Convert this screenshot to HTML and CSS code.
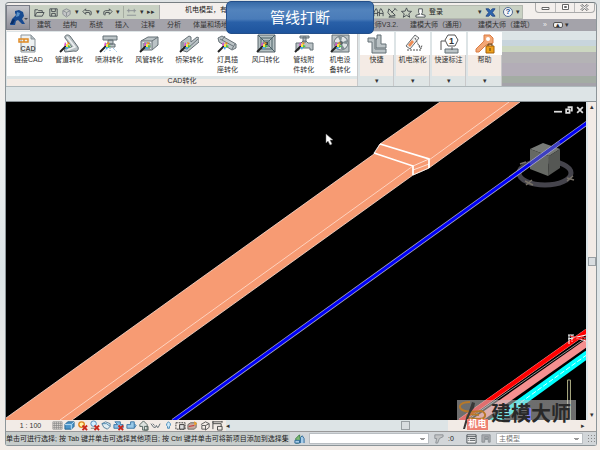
FILE: index.html
```html
<!DOCTYPE html>
<html lang="en">
<head>
<meta charset="utf-8">
<title>管线打断</title>
<link rel="stylesheet" href="styles.css">
</head>
<body>
<div class="window">
  <div class="banner">管线打断</div>
  <header class="top">
    <button class="app" aria-label="R"><svg width="24" height="24" viewBox="0 0 24 24"><path d="M9 5l4-1 4 2 1 4-2 3 3 5h-3l-4-4-2 1-1 4H4l2-6 4-4-1-2z" fill="#174a91"/><path d="M11 6l3 1-1 3-3 1z" fill="#5b91c7"/><path d="M4 18l3-5 2 1-2 4z" fill="#082d66"/><path d="M18 12h4l-2 2z" fill="#4b4b50"/></svg></button>
    <div class="bars">
      <div class="titlebar">
        <div class="quick">
          <button aria-label="打开"><svg class="s" viewBox="0 0 12 12"><path d="M1 10V3h3l1 1h4v2M1 10l2-4h8l-2 4z"/></svg></button>
          <button aria-label="保存"><svg class="s" viewBox="0 0 12 12"><path d="M2 2h8v8H2zM4 2v3h4V2M4 10V7h4v3"/></svg></button>
          <button aria-label="同步"><svg class="s dim" viewBox="0 0 12 12"><path d="M2 4l4-2 4 2v4l-4 3-4-3zM2 4l4 2 4-2M6 6v4"/></svg></button><i>▾</i>
          <button aria-label="撤销"><svg class="s" viewBox="0 0 12 12"><path d="M4 2L1 5l3 3V6h4l1 3 1-1V5L8 4H4z"/></svg></button><i>▾</i>
          <button aria-label="重做"><svg class="s" viewBox="0 0 12 12"><path d="M8 2l3 3-3 3V6H4L3 9 2 8V5l2-1h4z"/></svg></button><i>▾</i>
          <span class="rule"></span>
          <button aria-label="测量"><svg class="s dim" viewBox="0 0 12 12"><path d="M1 4h10M3 2v4M9 2v4M1 9h10"/></svg></button><i>▾</i><i>▸▸</i>
        </div>
        <span class="doc">机电模型，有</span>
        <div class="info">
          <svg class="s" viewBox="0 0 12 12"><path d="M1 10V6l2-4h1l1 3v5M7 10V5l1-3h1l2 4v4M5 6h2M1 7h4M7 7h4"/></svg>
          <svg class="s" viewBox="0 0 12 12"><path d="M2 2l7 7-5 1-3-4zM5 6l4-4M4 10l-2 1h7M8 1l3 3"/></svg>
          <svg class="s" viewBox="0 0 12 12"><path d="M6 1l1.5 3.5 4 .3-3 2.6 1 3.8L6 9l-3.500 2.200 1-3.800-3-2.600 4-.3z"/></svg>
          <svg class="s" viewBox="0 0 12 12"><path d="M4 2h4v4L7 8l4 1v2H1V9l4-1-1-2z" fill="#fff"/></svg>
          <button class="login">登录</button>
          <i>▾</i>
          <svg class="s" viewBox="0 0 12 12"><path d="M1 2h3l2 2 2-2h3L8 6l3 4H8L6 8l-2 2H1l3-4z" fill="#2c66b0" stroke="#284a86"/></svg>
          <span class="rule"></span>
          <button class="help" aria-label="帮助">?</button><i>▾</i>
        </div>
        <div class="winbtns">
          <button aria-label="最小化"><svg width="9" height="7"><path d="M1 3.500h7v2H1z"/></svg></button>
          <button aria-label="还原"><svg width="9" height="7"><path d="M1.500 .5h6v5h-6zM3.500 2.500h2v1h-2z"/></svg></button>
          <button aria-label="关闭"><svg width="9" height="7"><path d="M2 .5l2.500 2L7 .5l1 1-2 2 2 2-1 1-2.500-2-2.500 2-1-1 2-2-2-2z"/></svg></button>
        </div>
      </div>
      <nav class="tabs">
        <a href="#">建筑</a><a href="#">结构</a><a href="#">系统</a><a href="#">插入</a><a href="#">注释</a><a href="#">分析</a><a href="#">体量和场地</a>
        <a href="#" class="push">建模大师V3.2.</a><a href="#">建模大师（通用）</a><a href="#">建模大师（建筑）</a>
        <span class="more">»</span><button class="fold" aria-label="折叠">▴</button><i>▾</i>
      </nav>
    </div>
  </header>

  <section class="ribbon">
    <div class="panel cad">
      <div class="tools">
        <button><svg class="b" viewBox="0 0 20 20"><path d="M3 1h10l4 4v13H3z" fill="#edf1f2" stroke="#8b9499"/><path d="M13 1v4h4" fill="#b4bec3" stroke="#8b9499"/><path d="M1 5h5v3H1zM6 5h4v3H6" fill="none" stroke="#e08b25" stroke-width="1.500"/><text x="10" y="17" text-anchor="middle" class="cadtext">CAD</text></svg>链接CAD</button>
        <button><svg class="b" viewBox="0 0 20 20"><path d="M6 4c-1-3 3-4 5-2l8 11c1 3-1 5-4 4l-9 1-1-3 8-2z" class="metal"/><path d="M8 3l8 10-8 3" fill="none" stroke="#eef2f3" stroke-width="1.500"/><use href="#wand"/></svg>管道转化</button>
        <button><svg class="b" viewBox="0 0 20 20"><path d="M4 2h14v4H4zM9 6h5v4H9zM7 10h9v3H7z" class="metal"/><path d="M8 14l-3 4M11 14v4M14 14l4 4" stroke="#70a8d8" stroke-dasharray="1 1"/><use href="#wand"/></svg>喷淋转化</button>
        <button><svg class="b" viewBox="0 0 20 20"><path d="M2 7l7-4h10v8l-6 5H2z" class="metal"/><path d="M2 7h11v9M13 7l6-4M5 9h6v5H5z" fill="#e9edee" stroke="#677177"/><use href="#wand"/></svg>风管转化</button>
        <button><svg class="b" viewBox="0 0 20 20"><path d="M2 8l8-6 2 1v5l6-5 2 1v4L8 18l-6-2z" class="metal"/><path d="M4 8v5l4 2L19 5" fill="none" stroke="#69747a"/><use href="#wand"/></svg>桥架转化</button>
        <button><svg class="b" viewBox="0 0 20 20"><path d="M1 4l4-2 14 8v4l-4 2L2 8z" class="metal"/><path d="M3 5l13 7M8 2l-3 4M18 10l-3 5" stroke="#69747a"/><use href="#wand"/></svg>灯具插<br>座转化</button>
        <button><svg class="b" viewBox="0 0 20 20"><path d="M2 1h17v17H2z" fill="#b4c0c2" stroke="#59646a"/><path d="M5 4h11v11H5zM8 7h5v5H8zM2 1l6 6M19 1l-6 6M19 18l-6-6" fill="none" stroke="#4a6067"/><path d="M9 8h3v3H9z" fill="#33464d"/><use href="#wand"/></svg>风口转化</button>
        <button><svg class="b" viewBox="0 0 20 20"><path d="M2 9h5l2-2h3l2 2h5v7h-3v-2H5v2H2zM9 3h3v5H9zM6 2h9v2H6z" class="metal"/><use href="#wand"/></svg>管线附<br>件转化</button>
        <button><svg class="b" viewBox="0 0 20 20"><path d="M2 1h17v17H2z" class="metal"/><circle cx="11" cy="9" r="7" fill="#e1e5e7" stroke="#69747a"/><path d="M11 9L8 3h4zM11 9l6-3v4zM11 9l4 6h-4zM11 9l-6 3V8z" fill="#819095"/><circle cx="11" cy="9" r="2" fill="#59646a"/><use href="#wand"/></svg>机电设<br>备转化</button>
      </div>
      <div class="caption">CAD转化</div>
    </div>
    <div class="panel small"><button><svg class="b" viewBox="0 0 20 20"><path d="M1 4h7v11h11v4H5V8H1zM10 1h4v9h5v4H9V5h1z" class="metal"/></svg><span>快捷</span></button><div class="drop">▾</div></div>
    <div class="panel small"><button><svg class="b" viewBox="0 0 20 20"><path d="M3 12L12 1l4 3-9 11z" fill="#eee" stroke="#686d70"/><path d="M5 11l4-5 2 2-4 5z" fill="#ef8b52"/><path d="M4 16h15M12 4l5 10M16 11l2 4 1-4" fill="none" stroke="#555" stroke-dasharray="2 1"/></svg><span>机电深化</span></button><div class="drop">▾</div></div>
    <div class="panel small"><button><svg class="b" viewBox="0 0 20 20"><path d="M6 15h13v4H6z" class="metal"/><path d="M2 16V7h4M13 13v3M9 1h7l3 5-3 6H9L6 6z" fill="#fff" stroke="#555"/><text x="12.500" y="10" text-anchor="middle" class="num">1</text></svg><span>快速标注</span></button><div class="drop">▾</div></div>
    <div class="panel small"><button><svg class="b" viewBox="0 0 20 20"><path d="M9 1h6l3 3v5l-3 2h-4l-7 7H1v-3l8-8z" fill="#f3a775" stroke="#d97d45"/><circle cx="13" cy="5" r="2" fill="#fff"/><path d="M11 12h8v7h-8z" fill="#eda11c" stroke="#a76108"/><path d="M13 12v-2h4v2M15 14v3" fill="none" stroke="#5b3c15"/></svg><span>帮助</span></button><div class="drop">▾</div></div>
    <div class="stripes"></div>
  </section>
  <div class="options"></div>

  <main class="work">
    <div class="view">
      <svg class="scene" viewBox="6 102 580 318" preserveAspectRatio="xMinYMin slice">
        <path d="M6 418L374 154l6-10 60-42h80l-91 66-16 7L72 420H6z" fill="#f79b73"/>
        <path d="M6 418L374 154l6-10 60-42M520 102l-91 66-16 7L72 420M60 420L413 166M429 160l80-58" fill="none" stroke="#ffe0d2" stroke-width=".8"/>
        <path d="M374 153l39 13v9M380 144l49 15v9" fill="none" stroke="#fff" stroke-width="1.700"/>
        <path d="M413 166l16-7M413 175l16-7M413 170l16-6M374 153l6-9" fill="none" stroke="#fff" stroke-width=".7"/>
        <ellipse cx="545" cy="173" rx="26" ry="12" fill="none" stroke="#45444c" stroke-width="5"/>
        <path d="M530 149l13-6 17 6-11 7z" fill="#777a76"/>
        <path d="M530 149l19 7-1 20-18-7z" fill="#666964"/>
        <path d="M549 156l11-7v19l-12 8z" fill="#555754"/>
        <path d="M525 181l8 4M526 185l6-5M567 178l7 2M567 181l6-5M520 164l6-2" stroke="#777167" stroke-width="1.500"/>
        <path d="M173 421L587 123" stroke="#aaaacd" stroke-width="4.500"/>
        <path d="M173 421L587 123" stroke="#0000f5" stroke-width="3"/>
        <path d="M530 164L560 142.500" stroke="#70728f" stroke-width="3" stroke-opacity=".55"/>
        <path d="M460 421L587 331" stroke="#ff9b9b" stroke-width="5"/><path d="M460 421L587 331" stroke="#f00" stroke-width="4"/>
        <path d="M466 421l121-84" stroke="#bbb" stroke-width=".8"/>
        <path d="M473 423L588 342" stroke="#f59090" stroke-width="7"/>
        <path d="M492 423L588 354" stroke="#0ff" stroke-width="8"/><path d="M492 423L588 354" stroke="#d8ffff" stroke-width="1" stroke-dasharray="5 2"/>
        <path d="M568 335h6M569 335v9M572 335v7M568 339l18-4M571 336l15 5" fill="none" stroke="#fff"/><path d="M570 336l16 4M571 341l15-4" stroke="#f22"/>
        <path d="M567.500 420v-40h3v40" fill="#111" stroke="#a4a47d"/>
        <path d="M527 408h4v12h-4z" fill="#22f"/>
        <path d="M326 134v9l2-2 2 4 2-1-2-4h3z" fill="#fff" stroke="#777" stroke-width=".5"/>
      </svg>
      <div class="mdi"><button aria-label="最小化"><svg viewBox="0 0 7 7"><path d="M0 5h7"/></svg></button><button aria-label="还原"><svg viewBox="0 0 7 7"><path d="M1 3h3v3H1zM3 2V1h3v3H5"/></svg></button><button aria-label="关闭"><svg viewBox="0 0 7 7"><path d="M1 1l5 5M6 1L1 6"/></svg></button></div>
      <div class="mark">
        <svg width="34" height="30" viewBox="0 0 34 30"><path d="M13 2C4 2 1 6 4 9s13 3 21 2M25 11c5 3 4 8-3 8s-13-1-12-3 7-2 12-1" fill="none" stroke="#b87827" stroke-width="2"/><path d="M15 2l3 1-1 5-3 4-3 7-3 10H6l3-11 3-7z" fill="#383838"/></svg>
        <span class="tag">机电</span><strong>建模大师</strong>
      </div>
    </div>
    <div class="vscroll"><span>▴</span><b></b><span>▾</span></div>
  </main>

  <div class="viewbar">
    <button class="scale">1 : 100</button>
    <div class="icons">
      <svg viewBox="0 0 12 12"><path d="M1 2h10v8H1zM1 4h10M1 6h10M1 8h10M3 2v8M5 2v8M7 2v8M9 2v8" fill="none" stroke="#858585" stroke-width=".8"/></svg>
      <svg viewBox="0 0 12 12"><path d="M1 5l3-3h7v5l-3 3H1z" fill="#4b94c9" stroke="#28658e"/><path d="M1 5h7v5M8 5l3-3" stroke="#bfe3f7" fill="none"/></svg>
      <svg viewBox="0 0 12 12"><circle cx="5" cy="5" r="3" fill="#fff3a8" stroke="#df851f" stroke-width="1.500"/><use href="#x"/></svg>
      <svg viewBox="0 0 12 12"><circle cx="5" cy="4" r="3" fill="#d5edff" stroke="#4a86b8"/><path d="M2 9h5" stroke="#777"/><use href="#x"/></svg>
      <svg viewBox="0 0 12 12"><path d="M1 4l4-2 5 2v3l-3 3-4-2z" fill="#e1edf2" stroke="#557e99"/><path d="M1 4h5l4 3" stroke="#4a87af" fill="none"/></svg>
      <svg viewBox="0 0 12 12"><path d="M2 2h6v3h3v4H1V5h4z" fill="#8cc0e5" stroke="#3a75a5"/><use href="#x"/></svg>
      <svg viewBox="0 0 12 12"><path d="M1 9V5h4V2h4v7zM9 4l2 2-2 3" fill="#99c9e8" stroke="#3a75a5"/></svg>
      <svg viewBox="0 0 12 12"><path d="M2 5l4-4 4 4v6H5V7H2zM7 7h4v4H7z" fill="#dce2df" stroke="#50605b"/></svg>
      <svg viewBox="0 0 12 12"><path d="M1 4l3 4h2l1-2 1 2h1l2-4M3 4l2 2" fill="none" stroke="#58656d"/></svg>
      <svg viewBox="0 0 12 12"><path d="M4 4l2-2 2 2v2L7 7v2H5V7L4 6z" fill="#d3ecfa" stroke="#3c82b5"/></svg>
      <svg viewBox="0 0 12 12"><path d="M1 3h10v7H1z" fill="none" stroke="#333" stroke-dasharray="2 1"/><path d="M5 5h5v5H5z" fill="#ddd" stroke="#333"/></svg>
      <svg viewBox="0 0 12 12"><path d="M1 5l3-2h6v5L8 10H1z" fill="#c5aaa0" stroke="#6a6762"/><path d="M8 1l3 3-3 2z" fill="#f2a323"/><path d="M2 7l6-1" stroke="#c22"/></svg>
      <svg viewBox="0 0 12 12"><path d="M1 5l5-3 4 2v4l-4 3V6H2v4h4M6 6l4-2" fill="none" stroke="#555"/></svg>
      <svg viewBox="0 0 12 12"><path d="M1 10V2h10M1 4h9v3M6 7h5v4H6zM1 1v2M11 1v2" fill="none" stroke="#444"/></svg>
    </div>
    <div class="hscroll"><span>◂</span><b></b><span>▸</span></div>
  </div>

  <footer class="status">
    <p>单击可进行选择; 按 Tab 键并单击可选择其他项目; 按 Ctrl 键并单击可将新项目添加到选择集</p>
    <svg class="s" viewBox="0 0 12 12"><path d="M2 11V6l4-4 1 5-2 4z" fill="#7fba72" stroke="#347c40"/><path d="M7 11V5l2-2 2 3v5M1 8h5v3H1z" fill="#a7cce8" stroke="#2a6798"/></svg>
    <select class="set" aria-label="工作集"><option></option></select>
    <svg class="s dim" viewBox="0 0 12 12"><path d="M2 2h9v2L7 6 5 11H3l1-5H2z"/></svg><span class="count">:0</span>
    <svg class="s" viewBox="0 0 12 12"><path d="M1 2h10v9H1zM1 4h10M4 6h6M4 8h6M2 6h1M2 8h1" fill="#f4f4f4"/></svg>
    <svg class="s dim" viewBox="0 0 12 12"><path d="M1 2h9v8H8V7H4v3H1zM4 4h4v2H4z" fill="#a9abaf"/></svg>
    <select class="model" aria-label="设计选项"><option>主模型</option></select>
    <span class="grip"></span>
  </footer>
</div>
<svg width="0" height="0" class="defs">
  <symbol id="wand" viewBox="0 0 20 20" width="20" height="20" overflow="visible"><path d="M1 18l6-6" stroke="#222" stroke-width="2"/><path d="M6 8l2 3-3 1z" fill="#d84ecb"/><path d="M8 8l1 3 2-2z" fill="#f09323"/><path d="M9 11l3 1-3 2z" fill="#47c642"/><path d="M6 13l3 0-1 3z" fill="#40a8ed"/><path d="M7 10h2v3H7z" fill="#ffe14a"/></symbol>
  <symbol id="x" viewBox="0 0 12 12" width="12" height="12"><path d="M6 6l5 5M11 6l-5 5" stroke="#c9271d" stroke-width="2"/></symbol>
</svg>
</body>
</html>
```

FILE: styles.css
```css
* { box-sizing: border-box; }
body {
  margin: 0;
  height: 100vh;
  padding: 2px 3px 4px 5px;
  overflow: hidden;
  background: linear-gradient(#dfe3e4, #f3eeea 12%, #eef0f0 30%, #dce4e7 60%, #f3ece7);
  font: 7px/10px "Liberation Sans", "Noto Sans CJK SC", sans-serif;
  color: #333;
}
button, select { font: inherit; color: inherit; margin: 0; }
button { padding: 0; border: 0; background: none; }
a { color: inherit; text-decoration: none; }
i { font-style: normal; font-size: 7px; }
svg { display: block; flex: none; }
.defs { position: absolute; }
.window {
  position: relative;
  display: flex;
  flex-direction: column;
  height: 100%;
  border: 1px solid #8c9599;
  border-top-color: #777e82;
  border-radius: 4px 4px 3px 3px;
  background: #dde4e6;
}
.banner {
  position: absolute;
  z-index: 2;
  top: -2px;
  left: 220px;
  width: 148px;
  height: 33px;
  border: 1px solid #244f89;
  border-radius: 5px;
  background: linear-gradient(#376aa7, #5283bd 25%, #4a7cb9 55%, #2960a8 65%, #1e549d);
  color: #fff;
  font-size: 15px;
  line-height: 31px;
  text-align: center;
}
.top { display: flex; height: 28px; background: #f3efec; border-radius: 4px 4px 0 0; }
.app { width: 24px; margin: 2px 0 1px; border: 1px solid #777b85; background: linear-gradient(#c4c5ca, #8e8e98); }
.app svg { margin: -1px; }
.bars { flex: 1; min-width: 0; display: flex; flex-direction: column; }
.titlebar { display: flex; height: 16px; align-items: flex-start; }
.quick, .info { display: flex; align-items: center; height: 14px; margin-top: 2px; background: #c9d1c3; }
.quick { width: 130px; flex: none; padding: 0 4px; justify-content: space-between; border-right: 1px solid #aaa; }
.s { width: 11px; height: 11px; fill: none; stroke: #454b50; stroke-width: 1; }
.dim { stroke: #8b9095; fill: #c3c5c6; }
.rule { width: 1px; height: 12px; background: #a6ada2; }
.doc { flex: 1; min-width: 0; padding-left: 25px; line-height: 14px; overflow: hidden; white-space: nowrap; color: #222; }
.info { width: 159px; flex: none; padding: 0 2px 0 8px; gap: 3px; border: 1px solid #b4b9b0; }
.login { margin-right: auto; color: #222; }
.help { width: 10px; height: 10px; border: 1px solid #526a91; border-radius: 50%; background: #f2f6fa; color: #164a91; font-weight: bold; font-size: 8px; line-height: 8px; }
.winbtns { display: flex; flex: none; margin: 0 1px 0 12px; border: 1px solid #aaa; border-top: 0; border-radius: 0 0 4px 4px; }
.winbtns button { width: 19px; height: 9px; display: grid; place-items: center; border-left: 1px solid #bbb; }
.winbtns button:last-child { width: 20px; }
.winbtns button:first-child { border: 0; }
.winbtns path { fill: #fff; stroke: #666; stroke-width: 1; }
.tabs { display: flex; align-items: center; gap: 12px; height: 12px; padding: 0 27px 0 7px; background: #a4a3aa; white-space: nowrap; }
.push { margin-left: auto; }
.tabs .more { margin-left: -3px; color: #eee; }
.fold { width: 10px; height: 6px; margin-left: -6px; border: 1px solid #555; border-radius: 2px; background: #eee; line-height: 4px; }
.tabs i { margin-left: -10px; }
.ribbon { display: flex; gap: 2px; height: 56px; padding: 1px 0 0 1px; border-bottom: 1px solid #aeb8bb; }
.panel { display: flex; flex-direction: column; background: #fff; border-right: 1px solid #c9c9ca; }
.cad { width: 351px; }
.tools { display: flex; flex: 1; justify-content: space-between; padding: 2px 5px 0 7px; }
.tools button { display: flex; flex-direction: column; align-items: center; justify-content: flex-start; min-width: 24px; }
.tools button, .small button { white-space: nowrap; }
.b { width: 20px; height: 20px; margin-bottom: 1px; }
.metal { fill: #bbc3c6; stroke: #657076; stroke-width: 1; }
.cadtext { font: bold 7px "Liberation Sans", sans-serif; fill: #555; }
.num { font: bold 9px "Liberation Sans", sans-serif; fill: #333; }
.caption { height: 10px; background: linear-gradient(#dfe6e7 3px, #f4ece6 3px); text-align: center; }
.small { width: 34px; background: #f4ebe5; }
.small button { flex: 1; display: flex; flex-direction: column; align-items: center; }
.small .b { width: 34px; height: 23px; padding: 2px 7px 1px; margin: 0; background: #fff; }
.small .drop { height: 10px; background: #dfe5e5; text-align: center; line-height: 9px; }
.stripes { flex: 1; margin-left: -2px; background: linear-gradient(#dce4e6 8px, #c8d5dd 8px 14px, #ccd7c1 14px 20px, #b4b3b5 20px 31px, #b3adb7 31px 44px, #a3aca3 44px 51px, #a5a3aa 51px); }
.options { height: 15px; border-bottom: 1px solid #889094; }
.work { display: flex; flex: 1; min-height: 0; }
.view { position: relative; flex: 1; background: #000; }
.scene { width: 100%; height: 100%; }
.mdi { position: absolute; top: 4px; right: 2px; display: flex; gap: 3px; }
.mdi svg { width: 8px; height: 8px; fill: none; stroke: #ddd; stroke-width: 1.5; }
.mark { position: absolute; z-index: 1; right: 10px; bottom: -10px; width: 119px; height: 30px; display: flex; background: linear-gradient(#c8c8c88c 20px, transparent 20px); }
.mark strong { color: #292929; font-size: 20px; line-height: 29px; white-space: nowrap; }
.tag { position: absolute; left: 10px; bottom: 0; width: 21px; height: 11px; background: #ee8072; color: #fff; font-size: 9px; font-weight: bold; line-height: 11px; text-align: center; }
.vscroll, .hscroll { display: flex; align-items: center; justify-content: space-between; }
.vscroll { flex-direction: column; width: 10px; background: #f2ebe6; border-left: 2px solid #dce5e8; }
.vscroll b, .hscroll b { width: 9px; height: 9px; border: 1px solid #999fa3; background: #d9dde0; }
.vscroll b { width: 8px; }
.viewbar { display: flex; height: 12px; border-bottom: 1px solid #999; background: #f2ebe6; }
.scale { width: 46px; padding-left: 3px; white-space: pre; }
.icons { display: flex; width: 171px; justify-content: space-between; }
.icons svg { width: 11px; height: 11px; }
.hscroll { flex: 1; margin-left: 3px; padding-right: 11px; background: linear-gradient(90deg, #dde4e6 60%, #f2ebe6 60%); }
.status { display: flex; align-items: center; gap: 4px; height: 13px; background: #d2d6d9; }
.status p { width: 284px; height: 13px; margin: 0; overflow: hidden; white-space: nowrap; line-height: 13px; background: #c6cccb; color: #222; }
.status select { height: 11px; border: 1px solid #b9bec2; border-radius: 0; background: #fff; appearance: none; padding: 0 2px; background-image: linear-gradient(#999, #999), linear-gradient(#999, #999); background-size: 5px 1px, 3px 1px; background-position: right 3px top 4px, right 4px top 5px; background-repeat: no-repeat; }
.status .set { width: 120px; }
.status .model { flex: 1; min-width: 0; color: #777; }
.count { width: 14px; color: #222; }
.grip { width: 9px; height: 10px; background: radial-gradient(#888 1px, transparent 1px) 0 0 / 3px 3px; }
```
